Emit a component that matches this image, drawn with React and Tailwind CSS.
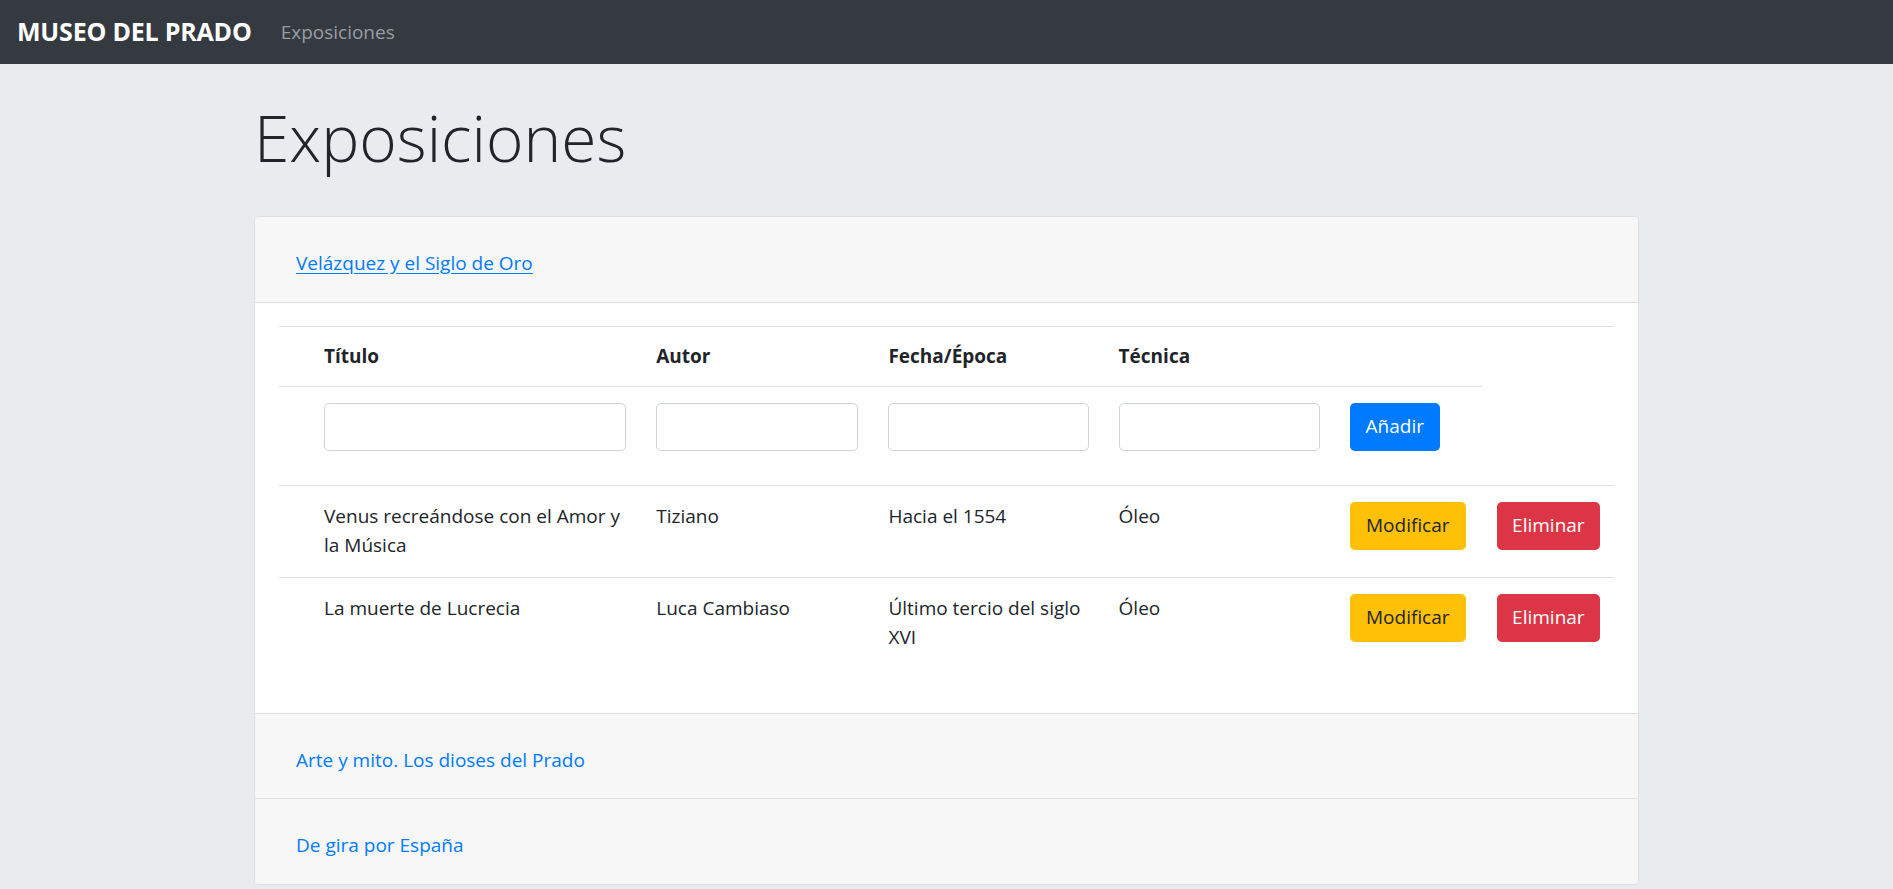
import { useState } from "react";

const obras = [
  {
    titulo: "Venus recreándose con el Amor y la Música",
    autor: "Tiziano",
    fecha: "Hacia el 1554",
    tecnica: "Óleo",
  },
  {
    titulo: "La muerte de Lucrecia",
    autor: "Luca Cambiaso",
    fecha: "Último tercio del siglo XVI",
    tecnica: "Óleo",
  },
];

const exposiciones = [
  "Velázquez y el Siglo de Oro",
  "Arte y mito. Los dioses del Prado",
  "De gira por España",
];

const App = () => {
  const [open, setOpen] = useState(0);

  return (
    <div className="min-h-screen bg-[#e9ecef] font-['Open_Sans',sans-serif] text-[#212529]">
      <nav className="h-[64px] bg-[#343a40] flex items-center px-[17px]">
        <div className="text-[25px] font-bold text-white mr-[29px] tracking-[-0.2px]">
          MUSEO DEL PRADO
        </div>
        <div className="text-[19px] text-[#9a9da0]">Exposiciones</div>
      </nav>

      <div className="w-[1385px] mx-auto">
        <h1 className="text-[64px] font-light leading-[1.2] pt-[36px] pb-[39px]">
          Exposiciones
        </h1>

        <div className="bg-white border border-[#dfdfdf] rounded-[5px] overflow-hidden">
          {exposiciones.map((expo, i) => (
            <div key={i}>
              <div
                className={
                  "bg-[#f7f7f7] flex items-center pl-[41px] pt-[8px] " +
                  (i === 0 ? "h-[86px] " : "h-[85px] ") +
                  (i < exposiciones.length - 1 && open !== i + 1 ? "border-b border-[#dfdfdf]" : "")
                }
              >
                <button
                  onClick={() => setOpen(i)}
                  className={
                    "text-[19px] text-[#007bff] underline-offset-[3px] " + (open === i ? "underline" : "")
                  }
                >
                  {expo}
                </button>
              </div>

              {open === i && (
                <div className="px-[24px] pt-[23px] pb-[44px] border-b border-[#dfdfdf]">
                  <table className="w-full table-fixed border-collapse text-[19px] leading-[29px]">
                    <colgroup>
                      <col className="w-[30px]" />
                      <col className="w-[332px]" />
                      <col className="w-[232px]" />
                      <col className="w-[230px]" />
                      <col className="w-[231px]" />
                      <col className="w-[147px]" />
                      <col className="w-[132px]" />
                    </colgroup>
                    <thead>
                      <tr className="text-left">
                        <th className="border-t border-b border-[#dee2e6]"></th>
                        <th className="border-t border-b border-[#dee2e6] px-[15px] py-[15px] font-bold">Título</th>
                        <th className="border-t border-b border-[#dee2e6] px-[15px] py-[15px] font-bold">Autor</th>
                        <th className="border-t border-b border-[#dee2e6] px-[15px] py-[15px] font-bold">Fecha/Época</th>
                        <th className="border-t border-b border-[#dee2e6] px-[15px] py-[15px] font-bold">Técnica</th>
                        <th className="border-t border-b border-[#dee2e6]"></th>
                        <th className="border-t border-[#dee2e6]"></th>
                      </tr>
                    </thead>
                    <tbody>
                      <tr>
                        <td></td>
                        {[0, 1, 2, 3].map((n) => (
                          <td key={n} className="px-[15px] pt-[16px] pb-[34px] align-top">
                            <input className="w-full h-[48px] border border-[#ced4da] rounded-[5px] bg-white outline-none px-[14px]" />
                          </td>
                        ))}
                        <td className="px-[15px] pt-[16px] pb-[34px] align-top">
                          <button className="h-[48px] w-[90px] bg-[#007bff] text-white rounded-[5px]">
                            Añadir
                          </button>
                        </td>
                        <td></td>
                      </tr>
                      {obras.map((obra, k) => (
                        <tr key={k} className="border-t border-[#dee2e6] align-top">
                          <td></td>
                          <td className="px-[15px] pt-[16px] pb-[17px]">{obra.titulo}</td>
                          <td className="px-[15px] pt-[16px] pb-[17px]">{obra.autor}</td>
                          <td className="px-[15px] pt-[16px] pb-[17px]">{obra.fecha}</td>
                          <td className="px-[15px] pt-[16px] pb-[17px]">{obra.tecnica}</td>
                          <td className="px-[15px] pt-[16px] pb-[17px]">
                            <button className="h-[48px] w-[116px] bg-[#ffc107] text-[#212529] rounded-[5px]">
                              Modificar
                            </button>
                          </td>
                          <td className="px-[15px] pt-[16px] pb-[17px]">
                            <button className="h-[48px] w-[103px] bg-[#dc3545] text-white rounded-[5px]">
                              Eliminar
                            </button>
                          </td>
                        </tr>
                      ))}
                    </tbody>
                  </table>
                </div>
              )}
            </div>
          ))}
        </div>
      </div>
    </div>
  );
};

export default App;
